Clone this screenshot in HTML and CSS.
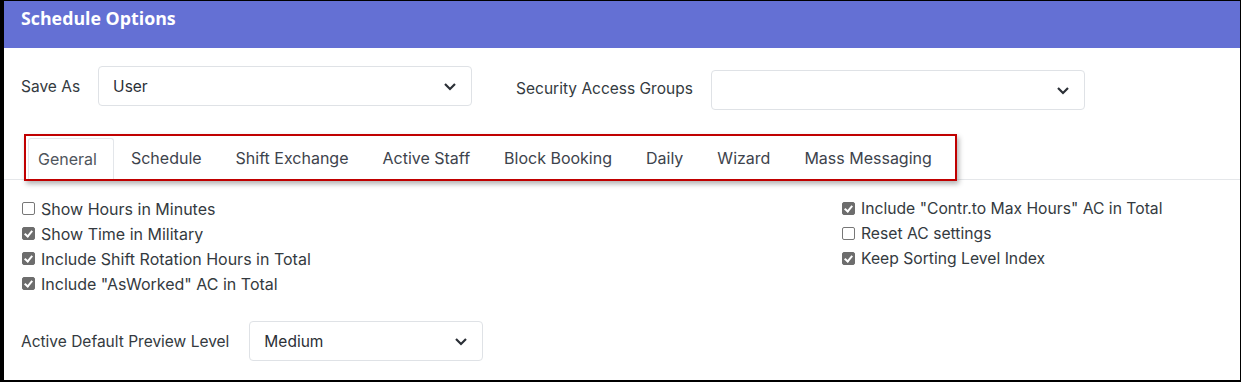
FILE: index.html
```html
<!DOCTYPE html>
<html lang="en">
<head>
  <meta charset="UTF-8" />
  <title>Schedule Options</title>
  <link rel="stylesheet" href="styles.css">
</head>
<body>
  <div class="window">
    <div class="header">Schedule Options</div>

    <div class="top-row">
      <div class="field">
        <span class="label">Save As</span>
        <div class="select select-save">
          <span>User</span>
          <svg class="chev" width="14" height="9" viewBox="0 0 14 9"><path d="M2 2l5 5 5-5" fill="none" stroke="#2b2f36" stroke-width="2.2"/></svg>
        </div>
      </div>
      <div class="field field-groups">
        <span class="label">Security Access Groups</span>
        <div class="select select-groups">
          <span></span>
          <svg class="chev" width="14" height="9" viewBox="0 0 14 9"><path d="M2 2l5 5 5-5" fill="none" stroke="#2b2f36" stroke-width="2.2"/></svg>
        </div>
      </div>
    </div>

    <div class="tabs-line">
      <div class="tabs">
        <div class="tab active">General</div>
        <div class="tab">Schedule</div>
        <div class="tab">Shift Exchange</div>
        <div class="tab">Active Staff</div>
        <div class="tab">Block Booking</div>
        <div class="tab">Daily</div>
        <div class="tab">Wizard</div>
        <div class="tab">Mass Messaging</div>
      </div>
    </div>

    <div class="options">
      <div class="col col-left">
        <label class="check"><span class="box"></span>Show Hours in Minutes</label>
        <label class="check"><span class="box on"></span>Show Time in Military</label>
        <label class="check"><span class="box on"></span>Include Shift Rotation Hours in Total</label>
        <label class="check"><span class="box on"></span>Include "AsWorked" AC in Total</label>
      </div>
      <div class="col col-right">
        <label class="check"><span class="box on"></span>Include "Contr.to Max Hours" AC in Total</label>
        <label class="check"><span class="box"></span>Reset AC settings</label>
        <label class="check"><span class="box on"></span>Keep Sorting Level Index</label>
      </div>
    </div>

    <div class="field preview-row">
      <span class="label">Active Default Preview Level</span>
      <div class="select select-preview">
        <span>Medium</span>
        <svg class="chev" width="14" height="9" viewBox="0 0 14 9"><path d="M2 2l5 5 5-5" fill="none" stroke="#2b2f36" stroke-width="2.2"/></svg>
      </div>
    </div>
  </div>
</body>
</html>
```

FILE: styles.css
```css
html, body {
  margin: 0;
  padding: 0;
  background: #000;
}

body {
  padding: 1px 1px 1px 4px;
  height: 382px;
  box-sizing: border-box;
  font-family: Inter, "Noto Sans", sans-serif;
  color: #343a40;
}

.window {
  background: #fff;
  height: 379px;
  overflow: hidden;
}

.header {
  height: 47px;
  background: #6470d4;
  color: #fff;
  font-family: "Open Sans", sans-serif;
  font-weight: 700;
  font-size: 17.8px;
  padding: 5px 0 0 17px;
  box-sizing: border-box;
}

.top-row {
  display: flex;
  align-items: flex-start;
  padding: 18px 0 0 17px;
}

.field {
  display: flex;
  align-items: center;
}

.label {
  font-size: 15.5px;
  color: #343a40;
}

.select {
  display: flex;
  align-items: center;
  justify-content: space-between;
  height: 40px;
  box-sizing: border-box;
  border: 1px solid #dfe2e6;
  border-radius: 4px;
  padding: 0 14px;
  font-size: 15.5px;
  color: #2b2f36;
}

.select-save {
  width: 374px;
  margin-left: 18px;
}

.field-groups {
  margin-left: 44px;
}

.select-groups {
  width: 374px;
  margin-left: 18px;
  margin-top: 4px;
}

.chev {
  display: block;
}

.tabs-line {
  margin-top: 24px;
  border-bottom: 1px solid #e5e7ea;
  height: 45px;
  padding-left: 20px;
}

.tabs {
  display: inline-flex;
  border: 2px solid #c00000;
  box-shadow: 2px 3px 5px rgba(0, 0, 0, 0.3);
  height: 47px;
  box-sizing: border-box;
  padding: 2px 6px 0 2px;
  background: #fff;
}

.tab {
  font-size: 16px;
  color: #3d434c;
  padding: 0 17px;
  line-height: 40px;
}

.tab.active {
  color: #4f555c;
  border: 1px solid #e3e6ea;
  border-bottom: none;
  border-radius: 3px 3px 0 0;
  padding: 0 16px 0 9px;
}

.options {
  display: flex;
  padding: 16px 0 0 18px;
}

.col {
  display: flex;
  flex-direction: column;
}

.col-left {
  width: 820px;
}

.check {
  display: flex;
  align-items: center;
  height: 25px;
  font-size: 16px;
  color: #343a40;
}

.col-right .check {
  font-size: 15.7px;
}

.box {
  width: 11px;
  height: 11px;
  border: 1px solid #777;
  border-radius: 2px;
  margin-right: 6px;
  box-sizing: content-box;
  position: relative;
}

.box.on {
  background: #6d6d6d;
  border-color: #6d6d6d;
}

.box.on::after {
  content: "";
  position: absolute;
  left: 3px;
  top: 1px;
  width: 3px;
  height: 6px;
  border: solid #fff;
  border-width: 0 2px 2px 0;
  transform: rotate(40deg);
}

.preview-row {
  padding: 25px 0 0 17px;
}

.select-preview {
  width: 234px;
  margin-left: 20px;
}
```
